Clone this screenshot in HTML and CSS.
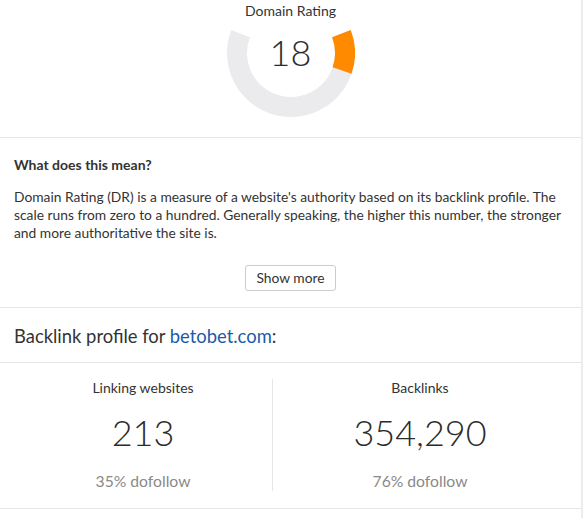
FILE: index.html
```html
<!DOCTYPE html>
<html lang="en">
<head>
<meta charset="utf-8">
<title>Domain Rating</title>
<link rel="stylesheet" href="styles.css">
</head>
<body>
<div class="page">
  <section class="dr">
    <div class="dr-label">Domain Rating</div>
    <div class="gauge">
      <svg class="gauge-svg" width="128" height="98" viewBox="0 30 128 98" aria-hidden="true">
        <path d="M114.41 44.65 A54 54 0 1 1 13.59 44.65" fill="none" stroke="#ebebed" stroke-width="20"/>
        <path d="M114.41 44.65 A54 54 0 0 1 115.06 81.58" fill="none" stroke="#ff8a00" stroke-width="20"/>
      </svg>
      <div class="gauge-value">18</div>
    </div>
  </section>

  <section class="meaning">
    <h3 class="meaning-title">What does this mean?</h3>
    <p class="meaning-text">Domain Rating (DR) is a measure of a website's authority based on its backlink profile. The scale runs from zero to a hundred. Generally speaking, the higher this number, the stronger and more authoritative the site is.</p>
    <div class="more-row"><button class="more-btn" type="button">Show more</button></div>
  </section>

  <section class="profile">
    <h2 class="profile-title">Backlink profile for <a class="profile-link" href="#">betobet.com</a>:</h2>
  </section>

  <section class="stats">
    <div class="stat stat-left">
      <div class="stat-label">Linking websites</div>
      <div class="stat-value">213</div>
      <div class="stat-sub">35% dofollow</div>
    </div>
    <div class="stat">
      <div class="stat-label">Backlinks</div>
      <div class="stat-value">354,290</div>
      <div class="stat-sub">76% dofollow</div>
    </div>
  </section>
</div>
</body>
</html>
```

FILE: styles.css
```css
* { box-sizing: border-box; }

html, body {
  margin: 0;
  padding: 0;
  background: #ffffff;
}

body {
  font-family: Lato, "Open Sans", "Liberation Sans", sans-serif;
  color: #333333;
}

.page {
  width: 583px;
  min-height: 518px;
  border-right: 2px solid #ececec;
}

/* Domain rating gauge */
.dr {
  padding: 3px 0 20px;
  text-align: center;
  border-bottom: 1px solid #e6e6e6;
}

.dr-label {
  font-size: 14px;
  line-height: 16px;
  color: #333333;
}

.gauge {
  position: relative;
  width: 128px;
  height: 98px;
  margin: 0 auto;
}

.gauge-svg {
  display: block;
}

.gauge-value {
  position: absolute;
  top: 15px;
  left: 0;
  right: 0;
  font-size: 36px;
  line-height: 36px;
  font-weight: 300;
  color: #2b2b2b;
  text-align: center;
}

/* What does this mean */
.meaning {
  padding: 17px 14px 16px;
  border-bottom: 1px solid #e6e6e6;
}

.meaning-title {
  margin: 0;
  font-size: 14px;
  line-height: 20px;
  font-weight: 700;
  color: #333333;
}

.meaning-text {
  margin: 13px 0 0;
  font-size: 13.8px;
  line-height: 18px;
  color: #333333;
}

.more-row {
  display: flex;
  justify-content: center;
  margin-top: 23px;
}

.more-btn {
  font-family: inherit;
  font-size: 13.8px;
  line-height: 16px;
  white-space: nowrap;
  color: #333333;
  background: #ffffff;
  border: 1px solid #cccccc;
  border-radius: 3px;
  padding: 4px 0;
  height: 26px;
  width: 91px;
}

/* Backlink profile */
.profile {
  padding: 16px 14px 14px;
  border-bottom: 1px solid #e6e6e6;
}

.profile-title {
  margin: 0;
  font-size: 18.4px;
  line-height: 24px;
  font-weight: 400;
  color: #333333;
}

.profile-link {
  color: #1c5aa9;
  text-decoration: none;
}

/* Stats */
.stats {
  display: grid;
  grid-template-columns: 259px 1fr;
  padding: 16px 14px 17px;
  border-bottom: 1px solid #e6e6e6;
}

.stat {
  display: flex;
  flex-direction: column;
  align-items: center;
  padding-top: 1px;
}

.stat-left {
  border-right: 1px solid #e6e6e6;
}

.stat-label {
  font-size: 14px;
  line-height: 16px;
  color: #333333;
}

.stat-value {
  margin-top: 14px;
  font-size: 36px;
  line-height: 44px;
  font-weight: 300;
  color: #2b2b2b;
}

.stat-sub {
  margin-top: 17px;
  font-size: 15.7px;
  line-height: 20px;
  font-weight: 400;
  color: #8a8a8a;
}
```
